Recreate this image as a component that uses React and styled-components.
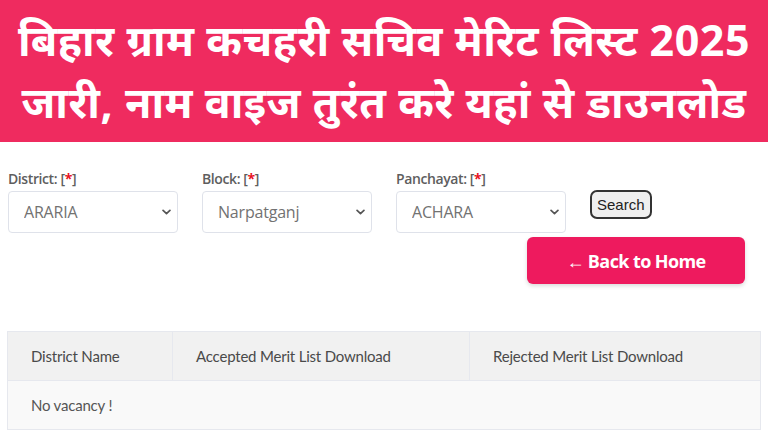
import React from 'react';
import styled, { createGlobalStyle } from 'styled-components';

const GlobalStyle = createGlobalStyle`
  body {
    margin: 0;
    background: #fff;
    font-family: Lato, "Open Sans", sans-serif;
  }
`;

function Chevron() {
  return (
    <ChevronIcon viewBox="0 0 10 6" width="9" height="6">
      <path d="M1.2 1.2 L5 4.8 L8.8 1.2" fill="none" stroke="#555" strokeWidth="1.9" strokeLinecap="round" strokeLinejoin="round" />
    </ChevronIcon>
  );
}

function Dropdown({ value, onChange, options }) {
  return (
    <SelectWrap>
      <Select value={value} onChange={(e) => onChange(e.target.value)}>
        {options.map((o) => (
          <option key={o} value={o}>
            {o}
          </option>
        ))}
      </Select>
      <Chevron />
    </SelectWrap>
  );
}

function App() {
  const [district, setDistrict] = React.useState('ARARIA');
  const [block, setBlock] = React.useState('Narpatganj');
  const [panchayat, setPanchayat] = React.useState('ACHARA');

  return (
    <>
      <GlobalStyle />
      <Banner>
        <Headline>
          बिहार ग्राम कचहरी सचिव मेरिट लिस्ट 2025
          <br />
          जारी, नाम वाइज तुरंत करे यहां से डाउनलोड
        </Headline>
      </Banner>
      <Page>
        <FilterRow>
          <Field>
            <Label>
              District: [<Req>*</Req>]
            </Label>
            <Dropdown value={district} onChange={setDistrict} options={['ARARIA']} />
          </Field>
          <Field>
            <Label>
              Block: [<Req>*</Req>]
            </Label>
            <Dropdown value={block} onChange={setBlock} options={['Narpatganj']} />
          </Field>
          <Field>
            <Label>
              Panchayat: [<Req>*</Req>]
            </Label>
            <Dropdown value={panchayat} onChange={setPanchayat} options={['ACHARA']} />
          </Field>
          <SearchButton type="button">Search</SearchButton>
        </FilterRow>
        <HomeRow>
          <HomeButton href="#">← Back to Home</HomeButton>
        </HomeRow>
        <Table>
          <colgroup>
            <col style={{ width: '165px' }} />
            <col style={{ width: '297px' }} />
            <col />
          </colgroup>
          <thead>
            <tr>
              <Th>District Name</Th>
              <Th>Accepted Merit List Download</Th>
              <Th>Rejected Merit List Download</Th>
            </tr>
          </thead>
          <tbody>
            <tr>
              <Td colSpan={3}>No vacancy !</Td>
            </tr>
          </tbody>
        </Table>
      </Page>
    </>
  );
}

const Banner = styled.header`
  background-color: #ef2b5f;
  height: 142px;
  display: flex;
  align-items: center;
  justify-content: center;
`;

const Headline = styled.h1`
  margin: 0;
  color: #fff;
  font-family: "Noto Sans", "Noto Sans Devanagari", Lato, sans-serif;
  font-weight: 700;
  font-size: 43px;
  line-height: 62px;
  text-align: center;
  white-space: nowrap;
  letter-spacing: 0.5px;
`;

const Page = styled.main`
  padding: 27px 7px 0 7px;
`;

const FilterRow = styled.div`
  display: flex;
  align-items: flex-start;
  gap: 24px;
  padding-left: 1px;
`;

const Field = styled.div`
  display: flex;
  flex-direction: column;
  width: 170px;
`;

const Label = styled.label`
  font-family: "Open Sans", sans-serif;
  font-size: 14px;
  font-weight: 600;
  color: #5e5e5e;
  line-height: 19px;
  margin-bottom: 3px;
  letter-spacing: -0.4px;
`;

const Req = styled.span`
  color: #e8131f;
  font-weight: 700;
`;

const SelectWrap = styled.div`
  position: relative;
  width: 170px;
  height: 42px;
`;

const Select = styled.select`
  appearance: none;
  height: 42px;
  width: 170px;
  padding: 0 24px 0 15px;
  border: 1px solid #dfe2ea;
  border-radius: 4px;
  background: #fff;
  color: #727272;
  font-family: "Open Sans", sans-serif;
  font-size: 16px;
  letter-spacing: -0.2px;
`;

const ChevronIcon = styled.svg`
  position: absolute;
  right: 7px;
  top: 18px;
  pointer-events: none;
`;

const SearchButton = styled.button`
  margin-top: 21px;
  height: 29px;
  padding: 0 5px;
  border: 2px solid #333;
  border-radius: 7px;
  background: #efefef;
  color: #222;
  font-family: Arial, "Liberation Sans", sans-serif;
  font-size: 15px;
`;

const HomeRow = styled.div`
  display: flex;
  justify-content: flex-end;
  padding-right: 16px;
  margin-top: 4px;
`;

const HomeButton = styled.a`
  display: flex;
  align-items: center;
  justify-content: center;
  width: 218px;
  height: 47px;
  border-radius: 6px;
  background: #ee1a5e;
  color: #fff;
  font-family: "Open Sans", sans-serif;
  font-size: 18px;
  font-weight: 700;
  text-decoration: none;
  letter-spacing: -0.6px;
  box-shadow: 0 2px 4px rgba(0, 0, 0, 0.15);
`;

const Table = styled.table`
  margin-top: 47px;
  width: 754px;
  table-layout: fixed;
  border-collapse: collapse;
  border: 1px solid #e6e8ee;
  font-family: Lato, sans-serif;
  color: #4a4a4a;
  font-size: 15px;
`;

const Th = styled.th`
  height: 48px;
  padding: 0 0 0 23px;
  text-align: left;
  font-weight: 400;
  background: #f1f1f1;
  border: 1px solid #e6e8ee;
  letter-spacing: -0.2px;
`;

const Td = styled.td`
  height: 48px;
  padding: 0 0 0 23px;
  background: #f9f9f9;
  color: #555;
  letter-spacing: -0.2px;
`;

export default App;
